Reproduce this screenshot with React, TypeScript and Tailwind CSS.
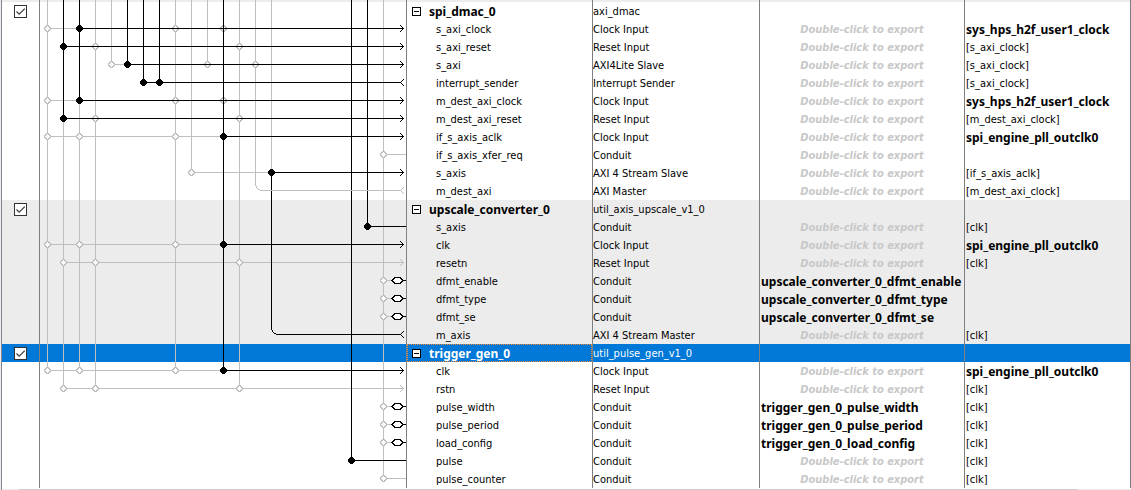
import { useState } from 'react';

type End = 'in' | 'out' | 'exported' | 'plain' | 'none';
type Tone = 'gray' | 'black';

interface Row {
  name: string;
  kind: string;
  header?: boolean;
  exported?: string;
  clock?: string;
  clockBold?: boolean;
  end?: End;
  tone?: Tone;
  grayFrom?: number;
  blackFrom?: number;
  open?: number[];
  joined?: number[];
  bend?: number;
}

const GRAY = '#bfbfbf';
const BLACK = '#000000';
const ROW_HEIGHT = 18;
const MID = 8;

const clockPins = { grayFrom: 7, open: [7, 135, 183], blackFrom: 39, joined: [39], end: 'in' as End };
const resetPins = { open: [55, 199], blackFrom: 23, joined: [23], end: 'in' as End };
const pllPins = { grayFrom: 7, open: [7, 39, 135], blackFrom: 183, joined: [183], end: 'in' as End };
const idleReset = { grayFrom: 23, open: [23, 55, 199], end: 'in' as End, tone: 'gray' as Tone };
const conduitOut = { grayFrom: 343, open: [343], end: 'exported' as End };

const groups: Row[][] = [
  [
    { name: 'spi_dmac_0', kind: 'axi_dmac', header: true },
    { name: 's_axi_clock', kind: 'Clock Input', clock: 'sys_hps_h2f_user1_clock', clockBold: true, ...clockPins },
    { name: 's_axi_reset', kind: 'Reset Input', clock: '[s_axi_clock]', ...resetPins },
    { name: 's_axi', kind: 'AXI4Lite Slave', clock: '[s_axi_clock]', grayFrom: 71, open: [71, 167, 215], blackFrom: 87, joined: [87], end: 'in' },
    { name: 'interrupt_sender', kind: 'Interrupt Sender', clock: '[s_axi_clock]', blackFrom: 103, joined: [103, 119], end: 'out' },
    { name: 'm_dest_axi_clock', kind: 'Clock Input', clock: 'sys_hps_h2f_user1_clock', clockBold: true, ...clockPins },
    { name: 'm_dest_axi_reset', kind: 'Reset Input', clock: '[m_dest_axi_clock]', ...resetPins },
    { name: 'if_s_axis_aclk', kind: 'Clock Input', clock: 'spi_engine_pll_outclk0', clockBold: true, ...pllPins },
    { name: 'if_s_axis_xfer_req', kind: 'Conduit', grayFrom: 343, open: [343], end: 'plain', tone: 'gray' },
    { name: 's_axis', kind: 'AXI 4 Stream Slave', clock: '[if_s_axis_aclk]', grayFrom: 151, open: [151], blackFrom: 231, joined: [231], end: 'in' },
    { name: 'm_dest_axi', kind: 'AXI Master', clock: '[m_dest_axi_clock]', bend: 215, end: 'out', tone: 'gray' },
  ],
  [
    { name: 'upscale_converter_0', kind: 'util_axis_upscale_v1_0', header: true },
    { name: 's_axis', kind: 'Conduit', clock: '[clk]', blackFrom: 327, joined: [327], end: 'plain' },
    { name: 'clk', kind: 'Clock Input', clock: 'spi_engine_pll_outclk0', clockBold: true, ...pllPins },
    { name: 'resetn', kind: 'Reset Input', clock: '[clk]', ...idleReset },
    { name: 'dfmt_enable', kind: 'Conduit', exported: 'upscale_converter_0_dfmt_enable', ...conduitOut },
    { name: 'dfmt_type', kind: 'Conduit', exported: 'upscale_converter_0_dfmt_type', ...conduitOut },
    { name: 'dfmt_se', kind: 'Conduit', exported: 'upscale_converter_0_dfmt_se', ...conduitOut },
    { name: 'm_axis', kind: 'AXI 4 Stream Master', clock: '[clk]', bend: 231, end: 'out' },
  ],
  [
    { name: 'trigger_gen_0', kind: 'util_pulse_gen_v1_0', header: true },
    { name: 'clk', kind: 'Clock Input', clock: 'spi_engine_pll_outclk0', clockBold: true, ...pllPins },
    { name: 'rstn', kind: 'Reset Input', clock: '[clk]', ...idleReset },
    { name: 'pulse_width', kind: 'Conduit', exported: 'trigger_gen_0_pulse_width', clock: '[clk]', ...conduitOut },
    { name: 'pulse_period', kind: 'Conduit', exported: 'trigger_gen_0_pulse_period', clock: '[clk]', ...conduitOut },
    { name: 'load_config', kind: 'Conduit', exported: 'trigger_gen_0_load_config', clock: '[clk]', ...conduitOut },
    { name: 'pulse', kind: 'Conduit', clock: '[clk]', blackFrom: 311, joined: [311], end: 'plain' },
    { name: 'pulse_counter', kind: 'Conduit', clock: '[clk]', grayFrom: 343, open: [343], end: 'plain', tone: 'gray' },
  ],
];

// Vertical buses: x position, first row and last row they reach (row -1 is the strip above the table).
const buses: { x: number; from: number; to: number; tone: Tone }[] = [
  { x: 7, from: -1, to: 20, tone: 'gray' },
  { x: 23, from: 6, to: 21, tone: 'gray' },
  { x: 39, from: 5, to: 20, tone: 'gray' },
  { x: 55, from: -1, to: 21, tone: 'gray' },
  { x: 71, from: -1, to: 3, tone: 'gray' },
  { x: 135, from: -1, to: 20, tone: 'gray' },
  { x: 151, from: -1, to: 9, tone: 'gray' },
  { x: 167, from: -1, to: 3, tone: 'gray' },
  { x: 199, from: -1, to: 21, tone: 'gray' },
  { x: 215, from: -1, to: 9.5, tone: 'gray' },
  { x: 231, from: -1, to: 9, tone: 'gray' },
  { x: 343, from: -1, to: 26, tone: 'gray' },
  { x: 23, from: -1, to: 6, tone: 'black' },
  { x: 39, from: -1, to: 5, tone: 'black' },
  { x: 87, from: -1, to: 3, tone: 'black' },
  { x: 103, from: -1, to: 4, tone: 'black' },
  { x: 119, from: -1, to: 4, tone: 'black' },
  { x: 183, from: -1, to: 20, tone: 'black' },
  { x: 231, from: 9, to: 17.5, tone: 'black' },
  { x: 311, from: -1, to: 25, tone: 'black' },
  { x: 327, from: -1, to: 12, tone: 'black' },
];

function Segments({ index, tone }: { index: number; tone: Tone }) {
  return (
    <>
      {buses
        .filter((b) => b.tone === tone && index >= b.from && index <= b.to)
        .map((b) => {
          const top = index === b.from && index >= 0 ? MID : 0;
          const bottom = index === b.to ? MID : ROW_HEIGHT;
          return <rect key={b.x} x={b.x} y={top} width={1} height={bottom - top} fill={tone === 'gray' ? GRAY : BLACK} />;
        })}
    </>
  );
}

const NODE = 'M-1 -3H2V-2H3V-1H4V2H3V3H2V4H-1V3H-2V2H-3V-1H-2V-2H-1Z';

function Wiring({ index, row, height }: { index: number; row?: Row; height: number }) {
  const color = row?.tone === 'gray' ? GRAY : BLACK;
  const end = row?.end ?? 'none';
  const stop = end === 'plain' ? 366 : end === 'out' ? 361 : 363;
  return (
    <svg width="366" height={height} viewBox={`0 0 366 ${height}`} className="block" shapeRendering="crispEdges" aria-hidden="true">
      <Segments index={index} tone="gray" />
      {row?.grayFrom !== undefined && (
        <rect
          x={row.grayFrom}
          y={MID}
          width={(end === 'exported' ? 352 : row.tone === 'gray' ? stop : row.blackFrom ?? stop) - row.grayFrom}
          height={1}
          fill={GRAY}
        />
      )}
      {row?.open?.map((x) => (
        <g key={x} transform={`translate(${x} ${MID})`}>
          <path d={NODE} fill={GRAY} />
          <path d="M0 -2H1V-1H2V0H3V1H2V2H1V3H0V2H-1V1H-2V0H-1V-1H0Z" fill="#ffffff" />
        </g>
      ))}
      <Segments index={index} tone="black" />
      {row?.blackFrom !== undefined && (
        <rect x={row.blackFrom} y={MID} width={stop - row.blackFrom} height={1} fill={BLACK} />
      )}
      {row?.joined?.map((x) => (
        <path key={x} transform={`translate(${x} ${MID})`} d={NODE} fill={BLACK} />
      ))}
      {row?.bend !== undefined && (
        <path
          transform={`translate(${row.bend} 0)`}
          d={`M0 0H1V4H2V6H3V7H5V8H${361 - row.bend}V9H5V8H3V7H2V6H1V4H0Z`}
          fill={color}
        />
      )}
      {end === 'in' && <path d="M360 5H361V6H362V7H363V8H364V9H363V10H362V11H361V12H360V11H361V10H362V9H363V8H362V7H361V6H360Z" fill={color} />}
      {end === 'out' && <path d="M363 5H364V6H363V7H362V8H361V9H362V10H363V11H364V12H363V11H362V10H361V9H360V8H361V7H362V6H363Z" fill={color} />}
      {end === 'exported' && (
        <>
          <path d="M354 5H361V6H362V7H363V8H366V9H363V10H362V11H361V12H354V11H353V10H352V9H351V8H352V7H353V6H354Z" fill={BLACK} />
          <path d="M355 6H360V7H361V8H362V9H361V10H360V11H355V10H354V9H353V8H354V7H355Z" fill="#ffffff" />
        </>
      )}
    </svg>
  );
}

function Tick({ id, label }: { id: string; label: string }) {
  const [on, setOn] = useState(true);
  return (
    <label htmlFor={id} aria-label={label} className="grid h-[18px] place-content-center pt-px">
      <input
        id={id}
        type="checkbox"
        aria-label={label}
        checked={on}
        onChange={() => setOn(!on)}
        className="col-start-1 row-start-1 size-[13px] appearance-none border border-[#333333] bg-white"
      />
      {on && (
        <svg viewBox="0 0 13 13" className="pointer-events-none col-start-1 row-start-1 size-[13px]" aria-hidden="true">
          <path d="M2.5 6.5L5.2 9.2L10.8 3.6" fill="none" stroke="#404040" strokeWidth="1.3" />
        </svg>
      )}
    </label>
  );
}

const cell = 'h-[18px] border-r border-[#7f7f7f] p-0 align-top whitespace-nowrap';
const strong = "pt-0.5 text-[12px] leading-4 font-bold [font-family:'Noto_Sans',sans-serif]";

export default function App() {
  const [closed, setClosed] = useState<number[]>([]);
  const toggle = (g: number) => setClosed(closed.includes(g) ? closed.filter((c) => c !== g) : [...closed, g]);
  let counter = -1;

  return (
    <main className="min-h-screen border-l border-[#ececec] bg-white text-[11px] leading-4 text-black [font-family:'DejaVu_Sans_Condensed','DejaVu_Sans',sans-serif]">
      <div className="border-l border-[#828790]">
        <table className="w-full table-fixed border-separate border-spacing-0">
          <colgroup>
            <col className="w-[38px]" />
            <col className="w-[367px]" />
            <col className="w-[186px]" />
            <col className="w-[167px]" />
            <col className="w-[205px]" />
            <col />
          </colgroup>
          <thead>
            <tr className="bg-[#ececec]">
              {['Use', 'Connections', 'Name', 'Description', 'Export', 'Clock'].map((h) => (
                <th key={h} scope="col" aria-label={h} className="h-0.5 border-r border-[#7f7f7f] p-0">
                  {h === 'Connections' && <Wiring index={-1} height={2} />}
                </th>
              ))}
            </tr>
          </thead>
          {groups.map((rows, g) => (
            <tbody key={g} className={g === 1 ? 'bg-[#ececec]' : 'bg-white'}>
              {rows.map((row) => {
                counter += 1;
                if (!row.header && closed.includes(g)) return null;
                const selected = row.header && g === 2;
                return (
                  <tr key={row.name} className={selected ? 'bg-[#0078d7] text-white' : ''}>
                    <td className={cell}>{row.header && <Tick id={`use-${row.name}`} label={`Use ${row.name}`} />}</td>
                    <td className={cell}>
                      <Wiring index={counter} row={row} height={ROW_HEIGHT} />
                    </td>
                    <td className={cell}>
                      {row.header ? (
                        <div
                          className={
                            selected
                              ? 'flex h-[18px] items-center gap-2 pl-[5px] outline-1 -outline-offset-1 outline-dotted outline-[#ff8728]'
                              : 'flex h-[18px] items-center gap-2 pl-[5px]'
                          }
                        >
                          <button type="button" aria-label={`Toggle ${row.name}`} onClick={() => toggle(g)} className="size-[9px]">
                            <svg viewBox="0 0 9 9" className="block size-[9px]" shapeRendering="crispEdges" aria-hidden="true">
                              <rect width="9" height="9" fill="#000000" />
                              <rect x="1" y="1" width="7" height="7" fill="#ffffff" />
                              <rect x="2" y="4" width="5" height="1" fill="#000000" />
                              {closed.includes(g) && <rect x="4" y="2" width="1" height="5" fill="#000000" />}
                            </svg>
                          </button>
                          <span className={strong}>{row.name}</span>
                        </div>
                      ) : (
                        <div className="pt-0.5 pl-[29px]">{row.name}</div>
                      )}
                    </td>
                    <td className={cell}>
                      <div className="pt-0.5">{row.kind}</div>
                    </td>
                    <td className={cell}>
                      {row.exported && (
                        <div className="pl-px">
                          <div className={strong}>{row.exported}</div>
                        </div>
                      )}
                      {!row.header && !row.exported && (
                        <div className="pt-0.5 text-center font-bold text-[#c8c8c8] italic">Double-click to export</div>
                      )}
                    </td>
                    <td className={cell}>
                      <div className="pl-px">
                        <div className={row.clockBold ? strong : 'pt-0.5'}>{row.clock}</div>
                      </div>
                    </td>
                  </tr>
                );
              })}
            </tbody>
          ))}
        </table>
        <div className="mt-px flex h-px bg-[#ececec]">
          <div className="mr-[53px] ml-[17px] flex-1 bg-[#cdcdcd]" />
        </div>
      </div>
    </main>
  );
}
